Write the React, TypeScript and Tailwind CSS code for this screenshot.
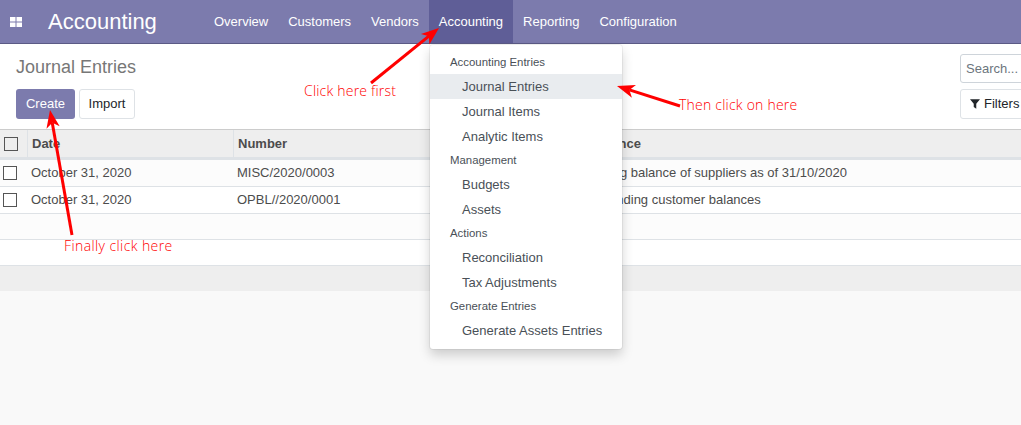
const navItems = ["Overview", "Customers", "Vendors", "Accounting", "Reporting", "Configuration"];

const menuGroups = [
  { title: "Accounting Entries", items: ["Journal Entries", "Journal Items", "Analytic Items"] },
  { title: "Management", items: ["Budgets", "Assets"] },
  { title: "Actions", items: ["Reconciliation", "Tax Adjustments"] },
  { title: "Generate Entries", items: ["Generate Assets Entries"] },
];

const rows = [
  { date: "October 31, 2020", number: "MISC/2020/0003", ref: "Opening balance of suppliers as of 31/10/2020", bg: "bg-[#fcfcfc]" },
  { date: "October 31, 2020", number: "OPBL//2020/0001", ref: "Outstanding customer balances", bg: "bg-white" },
];

const cols = "grid grid-cols-[27px_206px_341px_1fr]";

const Checkbox = ({ className }: { className: string }) => (
  <span className={`block w-[14px] h-[14px] border border-[#555] bg-white ${className}`} />
);

const Arrow = ({ x1, y1, x2, y2 }: { x1: number; y1: number; x2: number; y2: number }) => {
  const a = Math.atan2(y2 - y1, x2 - x1);
  const len = 19;
  const spread = 0.36;
  const p1 = `${x2 - len * Math.cos(a - spread)},${y2 - len * Math.sin(a - spread)}`;
  const p2 = `${x2 - len * Math.cos(a + spread)},${y2 - len * Math.sin(a + spread)}`;
  const nx = x2 - 13 * Math.cos(a);
  const ny = y2 - 13 * Math.sin(a);
  return (
    <g>
      <line x1={x1} y1={y1} x2={nx} y2={ny} stroke="#ff0000" strokeWidth="3" />
      <polygon points={`${x2},${y2} ${p1} ${nx},${ny} ${p2}`} fill="#ff0000" />
    </g>
  );
};

const Note = ({ className, children }: { className: string; children: string }) => (
  <span className={`absolute text-[14px] leading-[16px] font-light text-[#ff0000] font-['Open_Sans',sans-serif] whitespace-nowrap ${className}`}>
    {children}
  </span>
);

export default function App() {
  return (
    <div className="relative h-[425px] overflow-hidden bg-[#f9f9f9] font-['Liberation_Sans',sans-serif] text-[13px] text-[#4c4c4c]">
      <nav className="flex h-[44px] items-stretch bg-[#7c7bad] border-b border-[#5b5a85] text-white">
        <div className="flex w-[48px] items-center pl-[10px]">
          <svg width="12" height="10" viewBox="0 0 12 10" fill="#fff">
            <rect x="0" y="0" width="5.5" height="4.5" />
            <rect x="6.5" y="0" width="5.5" height="4.5" />
            <rect x="0" y="5.5" width="5.5" height="4.5" />
            <rect x="6.5" y="5.5" width="5.5" height="4.5" />
          </svg>
        </div>
        <div className="flex w-[156px] items-center text-[22px]">Accounting</div>
        {navItems.map((item) => (
          <div key={item} className={`flex items-center px-[10px] ${item === "Accounting" ? "bg-[#5f5e97]" : ""}`}>
            {item}
          </div>
        ))}
      </nav>

      <div className="flex h-[86px] justify-between bg-white border-b border-[#ccc] pl-[16px]">
        <div>
          <div className="mt-[12px] text-[18px] leading-[22px] text-[#777]">Journal Entries</div>
          <div className="mt-[11px] flex gap-[4px]">
            <button className="h-[30px] w-[59px] rounded-[3px] bg-[#7c7bad] text-white">Create</button>
            <button className="h-[30px] w-[56px] rounded-[3px] border border-[#dee2e6] bg-white text-[#212529]">Import</button>
          </div>
        </div>
        <div className="w-[61px] shrink-0">
          <div className="mt-[10px] flex h-[29px] w-[120px] items-center rounded-[3px] border border-[#ced4da] pl-[5px] text-[#6c757d]">
            Search...
          </div>
          <div className="mt-[6px] flex h-[30px] w-[120px] items-center gap-[4px] rounded-[3px] border border-[#dee2e6] pl-[9px] text-[#212529]">
            <svg width="10" height="10" viewBox="0.5 1 11 10.5" fill="#212529">
              <path d="M0.5 1h11L7.4 6v5.5L4.6 9.6V6z" />
            </svg>
            Filters
          </div>
        </div>
      </div>

      <div className={`${cols} h-[30px] bg-[#eee] border-b-[3px] border-[#dee2e6] font-bold`}>
        <div className="flex items-center pl-[4px]">
          <Checkbox className="!bg-transparent" />
        </div>
        <div className="flex items-center pl-[4px] border-l border-[#dee2e6]">Date</div>
        <div className="flex items-center pl-[4px] border-l border-[#dee2e6]">Number</div>
        <div className="flex items-center pl-[4px]">Reference</div>
      </div>

      {rows.map((row) => (
        <div key={row.number} className={`${cols} h-[27px] items-center border-b border-[#dee2e6] ${row.bg}`}>
          <Checkbox className="ml-[3px]" />
          <div className="pl-[4px]">{row.date}</div>
          <div className="pl-[4px]">{row.number}</div>
          <div className="pl-[4px]">{row.ref}</div>
        </div>
      ))}
      <div className="h-[26px] bg-[#fcfcfc] border-b border-[#dee2e6]" />
      <div className="h-[26px] bg-white border-b border-[#dee2e6]" />
      <div className="h-[25px] bg-[#eee]" />

      <div className="absolute left-[430px] top-[45px] w-[192px] rounded-[3px] bg-white py-[6px] shadow-[0_0_0_1px_rgba(0,0,0,0.05),0_6px_12px_rgba(0,0,0,0.18)]">
        {menuGroups.map((group) => (
          <div key={group.title}>
            <div className="flex h-[23px] items-center pl-[20px] text-[11.4px] text-[#495057]">{group.title}</div>
            {group.items.map((item) => (
              <div
                key={item}
                className={`flex h-[25px] items-center pl-[32px] text-[#495057] ${item === "Journal Entries" ? "bg-[#e9ecef] text-[#3f4549]" : ""}`}
              >
                {item}
              </div>
            ))}
          </div>
        ))}
      </div>

      <svg className="absolute left-0 top-0" width="1021" height="425">
        <Arrow x1={371} y1={83} x2={439} y2={28} />
        <Arrow x1={680} y1={106} x2={617} y2={86} />
        <Arrow x1={72} y1={235} x2={50} y2={110} />
      </svg>

      <Note className="left-[304px] top-[83px] tracking-[0.2px]">Click here first</Note>
      <Note className="left-[679px] top-[97px] tracking-[0.22px]">Then click on here</Note>
      <Note className="left-[64px] top-[238px] tracking-[0.4px]">Finally click here</Note>
    </div>
  );
}
